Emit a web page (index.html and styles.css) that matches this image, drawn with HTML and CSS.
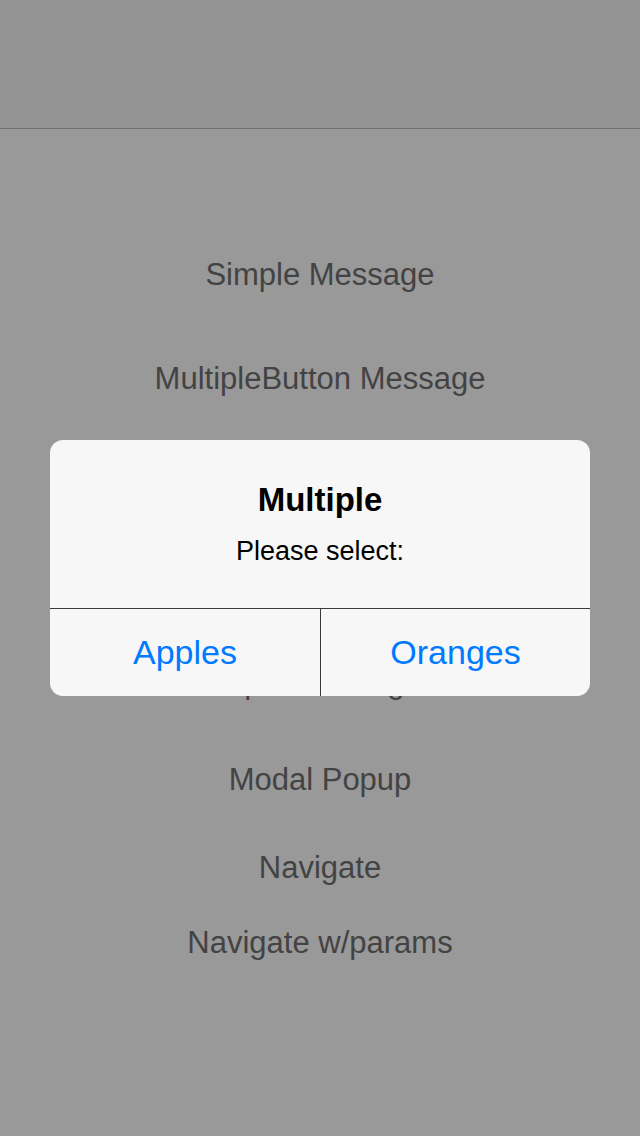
FILE: index.html
```html
<!DOCTYPE html>
<html>
<head>
<meta charset="utf-8">
<link rel="stylesheet" href="styles.css">
</head>
<body>
<div class="screen">
  <header class="navbar"></header>
  <main class="menu">
    <div class="item">Simple Message</div>
    <div class="item m64">MultipleButton Message</div>
    <div class="item m264">Input Message</div>
    <div class="item m57">Modal Popup</div>
    <div class="item m48">Navigate</div>
    <div class="item m35">Navigate w/params</div>
  </main>
  <div class="alert">
    <div class="alert-body">
      <div class="alert-title">Multiple</div>
      <div class="alert-msg">Please select:</div>
    </div>
    <div class="alert-buttons">
      <div class="alert-btn">Apples</div>
      <div class="alert-btn second">Oranges</div>
    </div>
  </div>
</div>
</body>
</html>
```
FILE: styles.css
```css
* { box-sizing: border-box; }
html, body { margin: 0; padding: 0; }
body {
  width: 640px;
  height: 1136px;
  background: #999999;
  font-family: "Liberation Sans", Arial, sans-serif;
  overflow: hidden;
}
.screen {
  position: relative;
  width: 640px;
  height: 1136px;
  background: #999999;
}
.navbar {
  height: 129px;
  background: #939393;
  border-bottom: 1px solid #6f6f6f;
}
.menu {
  display: flex;
  flex-direction: column;
  align-items: center;
  padding-top: 126px;
}
.item {
  height: 40px;
  line-height: 40px;
  font-size: 31px;
  color: #434343;
  white-space: nowrap;
}
.m64 { margin-top: 64px; }
.m264 { margin-top: 264px; }
.m57 { margin-top: 57px; }
.m48 { margin-top: 48px; }
.m35 { margin-top: 35px; }

.alert {
  position: absolute;
  left: 50px;
  top: 440px;
  width: 540px;
  background: #f7f7f7;
  border-radius: 13px;
  overflow: hidden;
}
.alert-body {
  padding: 40px 20px 41px;
  text-align: center;
}
.alert-title {
  height: 40px;
  line-height: 40px;
  font-size: 33px;
  font-weight: bold;
  color: #000;
}
.alert-msg {
  margin-top: 15px;
  height: 32px;
  line-height: 32px;
  font-size: 27px;
  color: #000;
}
.alert-buttons {
  display: grid;
  grid-template-columns: 270px 270px;
  border-top: 1px solid #3a3a3a;
}
.alert-btn {
  height: 87px;
  line-height: 87px;
  text-align: center;
  font-size: 34px;
  color: #007aff;
}
.alert-btn.second {
  border-left: 1px solid #3a3a3a;
}
```
